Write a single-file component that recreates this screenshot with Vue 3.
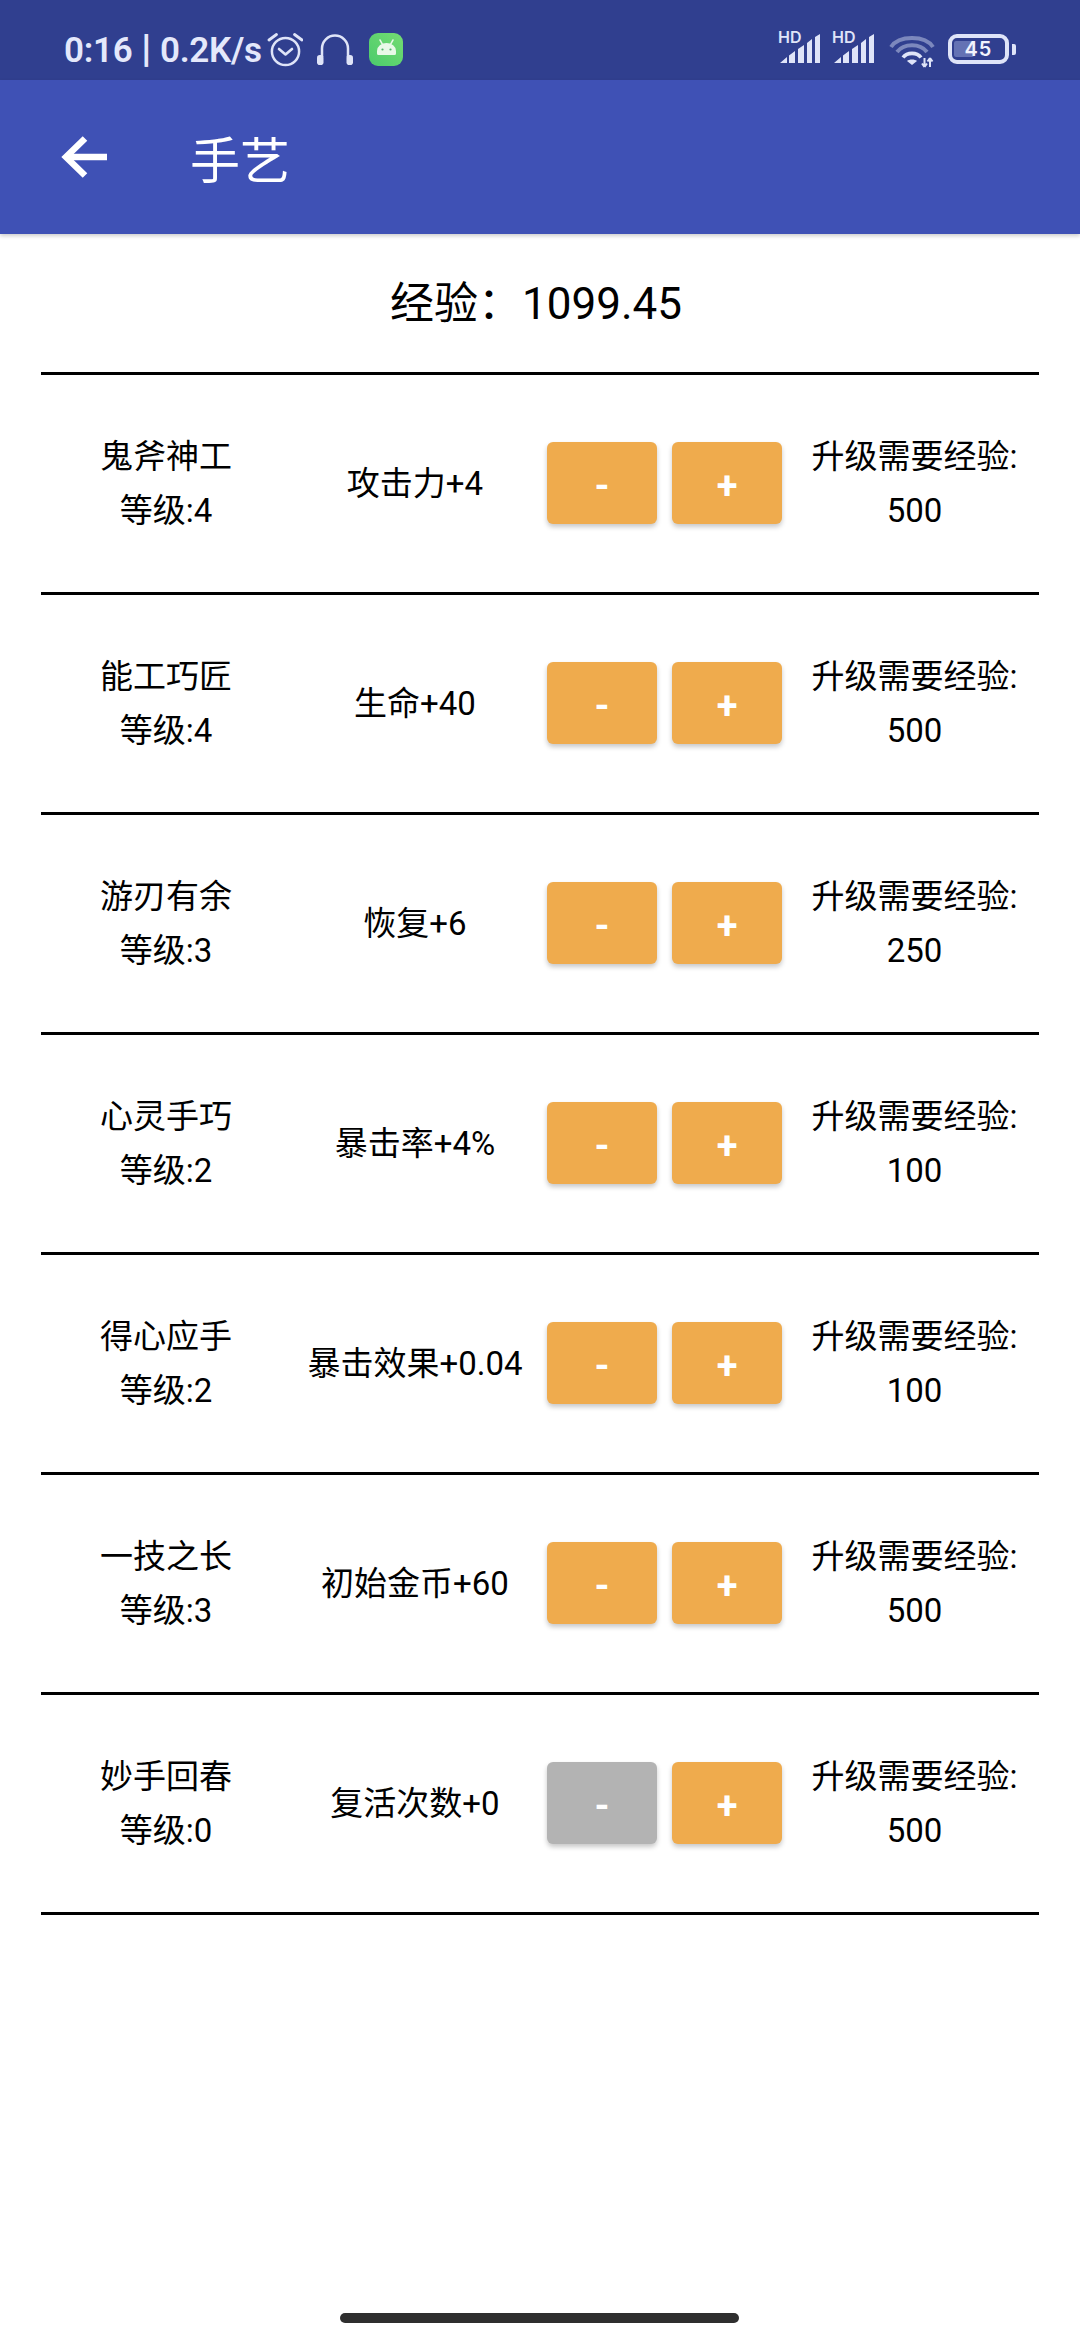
<template>
  <div class="page">
    <div class="status-bar">
      <span class="clock">0:16<b class="sep">|</b>0.2K/s</span>
      <svg class="ic-alarm" width="36" height="36" viewBox="0 0 36 36" fill="none" stroke="#dfe4f8">
        <circle cx="18.500" cy="19.500" r="13.600" stroke-width="2.500" />
        <path d="M12 17l6.500 5.500L25 17" stroke-width="2.600" stroke-linecap="round" stroke-linejoin="round" />
        <path d="M2 8L9.500 2.500M35 8L27.500 2.500" stroke-width="2.800" stroke-linecap="round" />
      </svg>
      <svg class="ic-phones" width="36" height="34" viewBox="0 0 36 34" fill="none">
        <path d="M5 24v-8.500a13 13 0 0 1 26 0V24" stroke="#dfe4f8" stroke-width="2.500" />
        <rect x="0" y="22" width="6.500" height="10" rx="2.800" fill="#dfe4f8" />
        <rect x="29.500" y="22" width="6.500" height="10" rx="2.800" fill="#dfe4f8" />
      </svg>
      <svg class="ic-android" width="34" height="33" viewBox="0 0 34 33">
        <defs>
          <linearGradient id="droidBg" x1="0" y1="1" x2="1" y2="0">
            <stop offset="0" stop-color="#4bcb6c" />
            <stop offset="1" stop-color="#74dc72" />
          </linearGradient>
        </defs>
        <rect width="34" height="33" rx="9" fill="url(#droidBg)" />
        <path d="M8 20.500V18a9.500 8 0 0 1 19 0v2.500a1.500 1.500 0 0 1-1.500 1.500h-16A1.500 1.500 0 0 1 8 20.500z" fill="#e8f9e8" />
        <path d="M11 7l2.200 3.800M24 7l-2.200 3.800" stroke="#e8f9e8" stroke-width="1.500" stroke-linecap="round" />
        <circle cx="13.500" cy="16.500" r="1.100" fill="#4fb56a" />
        <circle cx="21.500" cy="16.500" r="1.100" fill="#4fb56a" />
      </svg>
      <div class="status-right">
        <svg v-for="n in 2" :key="n" class="ic-signal" width="43" height="36" viewBox="0 -4 43 36">
          <text x="0" y="11" class="hd">HD</text>
          <path d="M2 31l7-6v6zM11 31v-7.500l6-4.500v12zM20 31V17l6-4v18zM29 31V11l5-4v24zM37 31V5l5-3v29z" fill="#dfe4f8" />
        </svg>
        <svg class="ic-wifi" width="46" height="34" viewBox="0 0 46 34" fill="none">
          <path d="M2 13C10 1 36 1 44 13" stroke="#7c88bd" stroke-width="4" />
          <path d="M8 18c7-9 23-9 30 0" stroke="#7c88bd" stroke-width="4" />
          <path d="M14 23.500c4-5.500 14-5.500 18 0" stroke="#dfe4f8" stroke-width="3.600" />
          <path d="M18 27c2-2 8-2 10 0l-5 4z" fill="#dfe4f8" />
          <path d="M35.500 24v9M35.500 33l-2.500-3.500M35.500 33l2.500-3.500M41 33v-9M41 24l-2.500 3.500M41 24l2.500 3.500" stroke="#dfe4f8" stroke-width="2" />
        </svg>
        <div class="battery">
          <div class="battery-body">
            <div class="battery-fill"></div>
            <span class="battery-num">45</span>
          </div>
          <div class="battery-nub"></div>
        </div>
      </div>
    </div>

    <header class="app-bar">
      <svg class="back" width="46" height="42" viewBox="0 0 46 42" fill="none" stroke="#fff" stroke-width="6.500">
        <path d="M46 21H5" />
        <path d="M24 2.500L5 21l19 18.500" />
      </svg>
      <span class="title">手艺</span>
    </header>

    <div class="exp">经验：1099.45</div>

    <div class="list">
      <div v-for="item in skills" :key="item.name" class="row">
        <div class="col-name">
          <div>{{ item.name }}</div>
          <div>等级:{{ item.level }}</div>
        </div>
        <div class="col-effect">{{ item.effect }}</div>
        <div class="btns">
          <button class="btn" :class="{ off: item.level === 0 }">-</button>
          <button class="btn">+</button>
        </div>
        <div class="col-need">
          <div>升级需要经验:</div>
          <div>{{ item.need }}</div>
        </div>
      </div>
    </div>

    <div class="home-bar"></div>
  </div>
</template>

<script setup>
const skills = [
  { name: '鬼斧神工', level: 4, effect: '攻击力+4', need: 500 },
  { name: '能工巧匠', level: 4, effect: '生命+40', need: 500 },
  { name: '游刃有余', level: 3, effect: '恢复+6', need: 250 },
  { name: '心灵手巧', level: 2, effect: '暴击率+4%', need: 100 },
  { name: '得心应手', level: 2, effect: '暴击效果+0.04', need: 100 },
  { name: '一技之长', level: 3, effect: '初始金币+60', need: 500 },
  { name: '妙手回春', level: 0, effect: '复活次数+0', need: 500 }
];
</script>

<style>
html, body {
  margin: 0;
  background: #fff;
}
</style>

<style scoped>
.page {
  position: relative;
  width: 1080px;
  height: 2340px;
  overflow: hidden;
  background: #fff;
  font-family: Roboto, "Noto Sans CJK SC", sans-serif;
  color: #000;
}
.status-bar {
  height: 80px;
  box-sizing: border-box;
  background: #303f8f;
  display: flex;
  align-items: flex-start;
  padding: 0 64px;
  color: #e4e8fb;
}
.clock {
  margin-top: 32px;
  width: 203px;
  font-weight: 600;
  font-size: 35px;
  line-height: 34px;
  letter-spacing: -0.3px;
  white-space: nowrap;
}
.sep {
  margin: 0 9px;
  font-weight: 900;
  font-size: 39px;
}
.ic-alarm {
  margin-top: 32px;
}
.ic-phones {
  margin: 33px 0 0 14px;
}
.ic-android {
  margin: 33px 0 0 16px;
}
.status-right {
  margin-left: auto;
  display: flex;
  align-items: flex-start;
}
.ic-signal {
  margin-top: 28px;
}
.ic-signal + .ic-signal {
  margin-left: 11px;
}
.hd {
  font-family: Inter, Roboto, sans-serif;
  font-size: 16px;
  font-weight: 600;
  fill: #dfe4f8;
}
.ic-wifi {
  margin: 34px 0 0 14px;
}
.battery {
  margin: 34px 0 0 13px;
  display: flex;
  align-items: center;
  gap: 3px;
}
.battery-body {
  position: relative;
  width: 61px;
  height: 30px;
  box-sizing: border-box;
  border: 4px solid #dfe4f8;
  border-radius: 9px;
  display: flex;
  align-items: center;
  justify-content: center;
}
.battery-fill {
  position: absolute;
  left: 2px;
  top: 3px;
  bottom: 3px;
  width: 20px;
  background: #6472b4;
  border-radius: 2px;
}
.battery-num {
  position: relative;
  font-family: Inter, Roboto, sans-serif;
  font-size: 20px;
  font-weight: 600;
  letter-spacing: 1px;
  color: #f1f3fd;
}
.battery-nub {
  width: 4px;
  height: 11px;
  background: #dfe4f8;
  border-radius: 0 2px 2px 0;
}
.app-bar {
  height: 154px;
  background: #3f51b5;
  display: flex;
  align-items: center;
  padding-left: 61px;
  box-shadow: 0 2px 4px rgba(0, 0, 0, 0.2);
  position: relative;
}
.title {
  color: #fff;
  font-size: 50px;
  margin-left: 83px;
}
.exp {
  height: 138px;
  display: flex;
  align-items: center;
  justify-content: center;
  font-size: 44px;
  padding: 0 8px 6px 0;
  box-sizing: border-box;
}
.list {
  margin: 0 41px;
  border-top: 3px solid #000;
}
.row {
  height: 217px;
  border-bottom: 3px solid #000;
  display: flex;
  align-items: center;
  font-size: 33px;
  line-height: 54px;
  text-align: center;
}
.col-name {
  width: 250px;
}
.col-effect {
  width: 248px;
}
.btns {
  margin: 0 0 2px 8px;
  display: flex;
  gap: 15px;
}
.btn {
  width: 110px;
  height: 82px;
  padding: 6px 0 0;
  border: none;
  border-radius: 6px;
  background: #efab4d;
  color: #fff;
  font-family: Roboto, sans-serif;
  font-weight: 700;
  font-size: 38px;
  box-shadow: 0 3px 5px rgba(0, 0, 0, 0.22);
}
.btn.off {
  background: #b3b3b3;
}
.col-need {
  flex: 1;
  margin-left: 8px;
  white-space: nowrap;
}
.home-bar {
  position: absolute;
  left: 340px;
  bottom: 17px;
  width: 399px;
  height: 10px;
  border-radius: 5px;
  background: #2f2f2f;
}
</style>
